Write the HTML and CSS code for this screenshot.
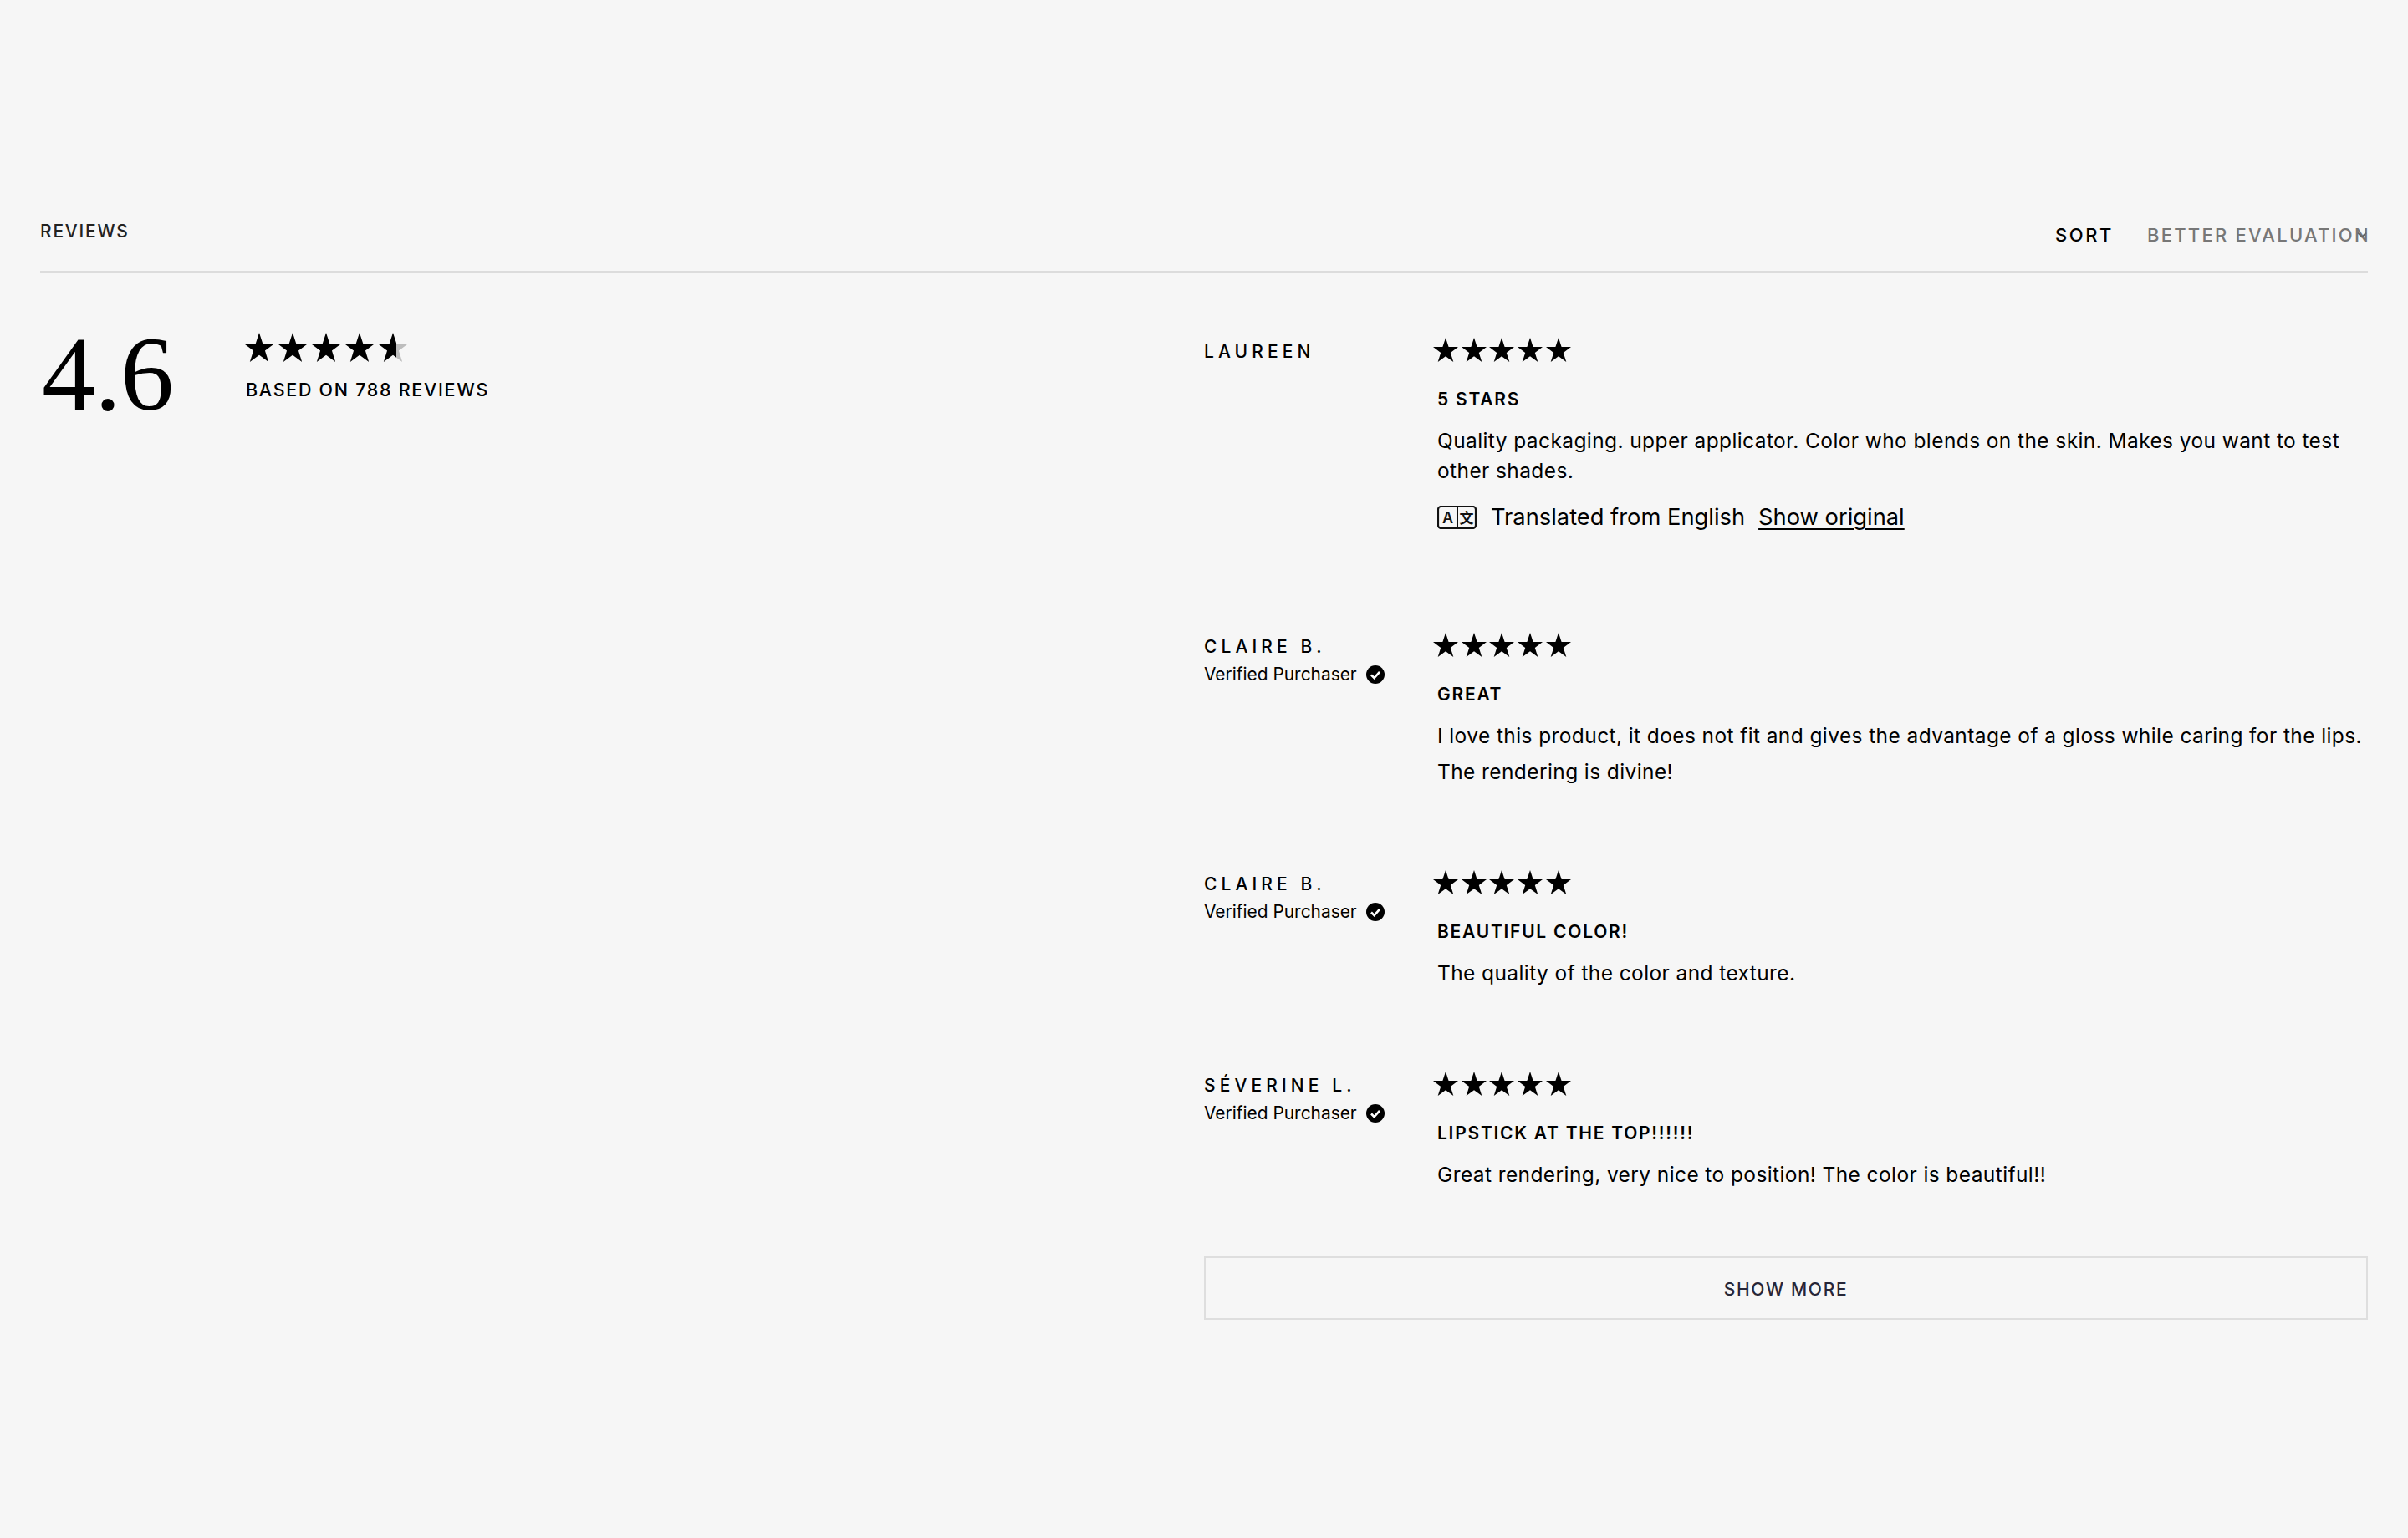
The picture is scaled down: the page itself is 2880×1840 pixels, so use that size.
FILE: index.html
```html
<!DOCTYPE html>
<html lang="en">
<head>
<meta charset="utf-8">
<title>Reviews</title>
<link rel="stylesheet" href="styles.css">
</head>
<body>
<svg class="defs" width="0" height="0" aria-hidden="true">
  <defs>
    <polygon id="star" points="15,0 18.6,10.9 30,11 20.8,17.9 24.3,29 15,22.2 5.7,29 9.2,17.9 0,11 11.4,10.9"/>
    <linearGradient id="part" x1="0" x2="1" y1="0" y2="0">
      <stop offset="0.62" stop-color="#000"/>
      <stop offset="0.62" stop-color="#bdbdbd"/>
    </linearGradient>
  </defs>
</svg>
<main class="page">
  <header class="head">
    <h2 class="head-title">REVIEWS</h2>
    <div class="sort">
      <span class="sort-label">SORT</span>
      <div class="sort-select">
        <span class="sort-value">BETTER EVALUATION</span>
        <svg class="chevron" viewBox="0 0 12 12"><path d="M1 3.5 L6 8.5 L11 3.5" fill="none" stroke="#666" stroke-width="1.8"/></svg>
      </div>
    </div>
  </header>
  <div class="content">
    <section class="summary">
      <div class="score">4.6</div>
      <div class="summary-side">
        <div class="stars stars-big">
          <svg viewBox="0 0 30 29"><use href="#star"/></svg>
          <svg viewBox="0 0 30 29"><use href="#star"/></svg>
          <svg viewBox="0 0 30 29"><use href="#star"/></svg>
          <svg viewBox="0 0 30 29"><use href="#star"/></svg>
          <svg viewBox="0 0 30 29"><use href="#star" fill="url(#part)"/></svg>
        </div>
        <div class="based">BASED ON 788 REVIEWS</div>
      </div>
    </section>
    <section class="reviews">
      <article class="review review-translated">
        <div class="author"><div class="name">LAUREEN</div></div>
        <div class="body">
          <div class="stars">
            <svg viewBox="0 0 30 29"><use href="#star"/></svg><svg viewBox="0 0 30 29"><use href="#star"/></svg><svg viewBox="0 0 30 29"><use href="#star"/></svg><svg viewBox="0 0 30 29"><use href="#star"/></svg><svg viewBox="0 0 30 29"><use href="#star"/></svg>
          </div>
          <h3 class="title">5 STARS</h3>
          <p class="text">Quality packaging. upper applicator. Color who blends on the skin. Makes you want to test other shades.</p>
          <div class="translated">
            <svg class="translate-icon" viewBox="0 0 47 28">
              <rect x="1" y="1" width="45" height="26" rx="3.5" fill="none" stroke="#111" stroke-width="2.2"/>
              <line x1="24" y1="1" x2="24" y2="27" stroke="#111" stroke-width="2"/>
              <text class="ti-a" x="12.5" y="21" text-anchor="middle">A</text>
              <text class="ti-z" x="35" y="20.5" text-anchor="middle">文</text>
            </svg>
            <span class="translated-text">Translated from English</span>
            <a class="original" href="#">Show original</a>
          </div>
        </div>
      </article>
      <article class="review">
        <div class="author">
          <div class="name">CLAIRE B.</div>
          <div class="verified">Verified Purchaser
            <svg class="check" viewBox="0 0 22 22"><circle cx="11" cy="11" r="11" fill="#000"/><path d="M6 11.5 L9.6 15 L16 7.8" fill="none" stroke="#fff" stroke-width="2.6"/></svg>
          </div>
        </div>
        <div class="body">
          <div class="stars">
            <svg viewBox="0 0 30 29"><use href="#star"/></svg><svg viewBox="0 0 30 29"><use href="#star"/></svg><svg viewBox="0 0 30 29"><use href="#star"/></svg><svg viewBox="0 0 30 29"><use href="#star"/></svg><svg viewBox="0 0 30 29"><use href="#star"/></svg>
          </div>
          <h3 class="title">GREAT</h3>
          <p class="text">I love this product, it does not fit and gives the advantage of a gloss while caring for the lips.</p>
          <p class="text text-next">The rendering is divine!</p>
        </div>
      </article>
      <article class="review">
        <div class="author">
          <div class="name">CLAIRE B.</div>
          <div class="verified">Verified Purchaser
            <svg class="check" viewBox="0 0 22 22"><circle cx="11" cy="11" r="11" fill="#000"/><path d="M6 11.5 L9.6 15 L16 7.8" fill="none" stroke="#fff" stroke-width="2.6"/></svg>
          </div>
        </div>
        <div class="body">
          <div class="stars">
            <svg viewBox="0 0 30 29"><use href="#star"/></svg><svg viewBox="0 0 30 29"><use href="#star"/></svg><svg viewBox="0 0 30 29"><use href="#star"/></svg><svg viewBox="0 0 30 29"><use href="#star"/></svg><svg viewBox="0 0 30 29"><use href="#star"/></svg>
          </div>
          <h3 class="title">BEAUTIFUL COLOR!</h3>
          <p class="text">The quality of the color and texture.</p>
        </div>
      </article>
      <article class="review review-last">
        <div class="author">
          <div class="name">SÉVERINE L.</div>
          <div class="verified">Verified Purchaser
            <svg class="check" viewBox="0 0 22 22"><circle cx="11" cy="11" r="11" fill="#000"/><path d="M6 11.5 L9.6 15 L16 7.8" fill="none" stroke="#fff" stroke-width="2.6"/></svg>
          </div>
        </div>
        <div class="body">
          <div class="stars">
            <svg viewBox="0 0 30 29"><use href="#star"/></svg><svg viewBox="0 0 30 29"><use href="#star"/></svg><svg viewBox="0 0 30 29"><use href="#star"/></svg><svg viewBox="0 0 30 29"><use href="#star"/></svg><svg viewBox="0 0 30 29"><use href="#star"/></svg>
          </div>
          <h3 class="title">LIPSTICK AT THE TOP!!!!!!</h3>
          <p class="text">Great rendering, very nice to position! The color is beautiful!!</p>
        </div>
      </article>
      <button class="more" type="button">SHOW MORE</button>
    </section>
  </div>
</main>
</body>
</html>
```

FILE: styles.css
```css
* { box-sizing: border-box; }
html, body { margin: 0; padding: 0; }
body {
  background: #f6f6f6;
  color: #000;
  font-family: "Inter", "Liberation Sans", sans-serif;
  min-height: 1840px;
}
.defs { position: absolute; }
.page { padding: 263px 48px 0; }

.head {
  display: flex;
  justify-content: space-between;
  align-items: flex-start;
  height: 64px;
  border-bottom: 3px solid #dcdcdc;
}
.head-title {
  margin: 2px 0 0;
  font-size: 21px;
  line-height: 24px;
  font-weight: 500;
  letter-spacing: 1.8px;
  color: #222;
}
.sort {
  display: flex;
  align-items: center;
  gap: 40px;
  margin-top: 6px;
  font-size: 22px;
  line-height: 24px;
  font-weight: 500;
  letter-spacing: 2.6px;
}
.sort-label { color: #000; }
.sort-select {
  position: relative;
  width: 264px;
  overflow: hidden;
  white-space: nowrap;
  color: #777;
}
.sort-value { letter-spacing: 2.25px; }
.chevron {
  position: absolute;
  right: 1px;
  top: 6px;
  width: 12px;
  height: 12px;
}

.content {
  display: grid;
  grid-template-columns: 1392px 1fr;
  padding-top: 71px;
  align-items: start;
}
.summary { display: flex; gap: 84px; }
.score {
  width: 160px;
  padding-left: 2px;
  font-family: "Liberation Serif", serif;
  font-size: 128px;
  line-height: 98px;
  letter-spacing: -1px;
  color: #000;
}
.stars { display: flex; gap: 3.7px; margin-left: -5px; height: 29px; }
.stars svg { width: 30px; height: 29px; display: block; flex: none; }
.stars-big { gap: 4px; margin-left: 0; height: 35px; }
.stars-big svg { width: 36px; height: 35px; }
.based {
  margin-top: 21px;
  margin-left: 2px;
  font-size: 21.5px;
  line-height: 24px;
  font-weight: 500;
  letter-spacing: 1.7px;
}

.reviews { padding-top: 6px; }
.review {
  display: grid;
  grid-template-columns: 279px 1fr;
  margin-bottom: 100px;
}
.review-translated { margin-bottom: 121px; }
.review-last { margin-bottom: 80px; }
.name {
  font-size: 21px;
  line-height: 24px;
  font-weight: 500;
  letter-spacing: 5.1px;
  margin-top: 5px;
}
.verified {
  display: flex;
  align-items: center;
  gap: 11px;
  margin-top: 9px;
  font-size: 20.9px;
  line-height: 24px;
  font-weight: 375;
  color: #000;
}
.check { width: 22px; height: 22px; flex: none; }
.title {
  margin: 33px 0 0;
  font-size: 21px;
  line-height: 24px;
  font-weight: 600;
  letter-spacing: 1.75px;
}
.text {
  margin: 19px 0 0;
  font-size: 24.5px;
  line-height: 36px;
  letter-spacing: 0.4px;
  font-weight: 375;
  color: #000;
}
.text-next { margin-top: 7px; }
.translated {
  display: flex;
  align-items: center;
  height: 34px;
  margin-top: 21px;
  font-size: 27.3px;
  line-height: 34px;
  font-weight: 375;
  color: #000;
}
.translate-icon { width: 47px; height: 28px; flex: none; margin-right: 17px; }
.ti-a { font-family: "Inter", sans-serif; font-size: 18px; font-weight: 600; fill: #111; }
.ti-z { font-family: "Noto Sans CJK SC", sans-serif; font-size: 17px; font-weight: 700; fill: #111; }
.original {
  margin-left: 16px;
  color: #000;
  text-decoration: underline;
  text-underline-offset: 4px;
  text-decoration-thickness: 2px;
}
.more {
  display: block;
  width: 100%;
  height: 76px;
  padding: 2px 0 0;
  background: transparent;
  border: 2px solid #dedede;
  font-family: "Inter", "Liberation Sans", sans-serif;
  font-size: 21px;
  font-weight: 500;
  letter-spacing: 1.7px;
  color: #262638;
}
```
